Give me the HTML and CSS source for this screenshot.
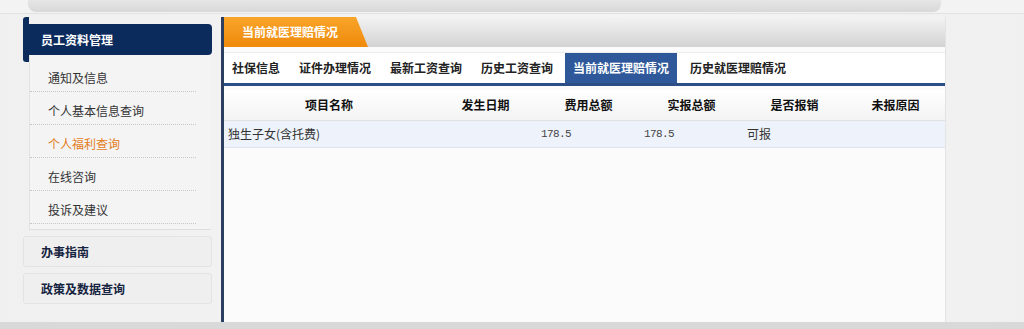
FILE: index.html
```html
<!DOCTYPE html>
<html lang="zh-CN">
<head>
<meta charset="utf-8">
<title>当前就医理赔情况</title>
<link rel="stylesheet" href="styles.css">
</head>
<body>
<div class="topbar"><div class="topbar-inner"></div></div>
<div class="layout">
  <aside class="sidebar">
    <div class="side-head">员工资料管理</div>
    <ul class="submenu">
      <li class="sub-item first">通知及信息</li>
      <li class="sub-item">个人基本信息查询</li>
      <li class="sub-item active">个人福利查询</li>
      <li class="sub-item">在线咨询</li>
      <li class="sub-item">投诉及建议</li>
    </ul>
    <div class="side-box">办事指南</div>
    <div class="side-box">政策及数据查询</div>
  </aside>
  <main class="panel">
    <div class="panel-head"><div class="panel-tab">当前就医理赔情况</div></div>
    <nav class="tabs">
      <span class="tab">社保信息</span>
      <span class="tab">证件办理情况</span>
      <span class="tab">最新工资查询</span>
      <span class="tab">历史工资查询</span>
      <span class="tab current">当前就医理赔情况</span>
      <span class="tab">历史就医理赔情况</span>
    </nav>
    <table class="grid">
      <colgroup>
        <col class="c1"><col class="c2"><col class="c2"><col class="c2"><col class="c2"><col class="c6">
      </colgroup>
      <thead>
        <tr><th>项目名称</th><th>发生日期</th><th>费用总额</th><th>实报总额</th><th>是否报销</th><th>未报原因</th></tr>
      </thead>
      <tbody>
        <tr><td>独生子女(含托费)</td><td></td><td class="num">178.5</td><td class="num">178.5</td><td>可报</td><td></td></tr>
      </tbody>
    </table>
  </main>
</div>
<div class="bottombar"></div>
</body>
</html>
```
FILE: styles.css
```css
* { box-sizing: border-box; }
html, body { margin: 0; padding: 0; }
body {
  width: 1024px;
  height: 329px;
  overflow: hidden;
  background: linear-gradient(90deg, #f0f0f0 0%, #f4f4f4 60%, #f0f0f0 100%);
  font-family: "Noto Sans CJK SC", "Noto Sans", sans-serif;
  font-size: 12px;
  color: #333;
}
.topbar {
  height: 14px;
  border-bottom: 1px solid #e2e2e2;
  background: #f3f3f3;
}
.topbar-inner {
  margin-left: 28px;
  width: 913px;
  height: 12px;
  background: linear-gradient(#e6e6e6, #d8d8d8);
  border-radius: 0 0 8px 8px;
}
.layout {
  display: flex;
  gap: 9px;
  padding: 3px 0 0 23px;
  height: 308px;
}
.sidebar { width: 189px; }
.side-head {
  position: relative;
  margin-top: 7px;
  height: 31px;
  line-height: 31px;
  padding-left: 18px;
  background: #0c2b5d;
  color: #fff;
  font-weight: bold;
  border-radius: 4px;
}
.side-head::before {
  content: "";
  position: absolute;
  left: 0;
  top: -7px;
  width: 6px;
  height: 45px;
  background: #0c2b5d;
  border-radius: 3px 0 0 3px;
}
.submenu {
  list-style: none;
  margin: 0 0 0 6px;
  padding: 0 0 5px 0;
  width: 182px;
  background: #f4f4f4;
  border-left: 1px solid #e2e2e2;
  border-bottom: 1px solid #dedede;
}
.sub-item {
  margin-right: 15px;
  padding: 5px 0 0 18px;
  line-height: 27px;
  border-bottom: 1px dotted #c8c8c8;
  color: #333;
}
.sub-item.first { padding-top: 9px; }
.sub-item.active { color: #e37c1c; }
.side-box {
  margin-top: 6px;
  height: 31px;
  line-height: 29px;
  padding-left: 17px;
  background: #efefef;
  border: 1px solid #e3e3e3;
  border-radius: 3px;
  font-weight: bold;
  color: #15233f;
}
.panel {
  width: 725px;
  height: 305px;
  background: #fbfbfb;
  border-left: 3px solid #2c3f60;
  border-right: 1px solid #e3e3e3;
}
.panel-head {
  height: 30px;
  background: linear-gradient(#f3f3f3, #d3d3d3);
}
.panel-tab {
  width: 144px;
  height: 30px;
  line-height: 30px;
  padding-left: 18px;
  color: #fff;
  font-weight: bold;
  background: linear-gradient(#f8a52a, #ef8a0c);
  clip-path: polygon(0 0, 132px 0, 144px 100%, 0 100%);
}
.tabs {
  display: flex;
  gap: 5px;
  margin-top: 5px;
  padding-left: 1px;
  height: 34px;
  background: #fff;
  border-bottom: 3px solid #2b4e86;
  border-top: 1px solid #ececec;
}
.tab {
  padding: 0 7px;
  line-height: 30px;
  font-weight: bold;
  color: #222;
}
.tab.current {
  background: #2e5899;
  color: #fff;
  padding: 0 8px;
}
.tab.current + .tab { margin-left: 1px; }
.grid {
  margin-top: 4px;
  width: 721px;
  border-collapse: collapse;
  table-layout: fixed;
}
.c1 { width: 210px; }
.c2 { width: 103px; }
.c6 { width: 99px; }
.grid th {
  height: 30px;
  font-weight: bold;
  color: #111;
  text-align: center;
  background: linear-gradient(#ffffff, #f3f3f3);
  border-bottom: 1px solid #e2e2e2;
  padding: 0;
}
.grid td {
  height: 27px;
  padding: 0 0 0 4px;
  background: #edf2fb;
  border-bottom: 1px solid #dfe5ef;
  color: #333;
}
.grid td.num {
  font-family: "Liberation Mono", monospace;
  font-size: 11px;
  letter-spacing: -0.6px;
  color: #444;
}
.bottombar {
  height: 8px;
  background: #d9d9d9;
}
```
